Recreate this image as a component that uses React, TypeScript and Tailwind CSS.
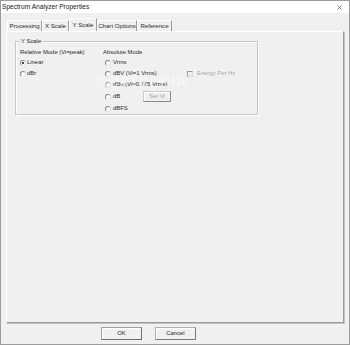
import React from "react";

const font = { fontFamily: '"Liberation Sans", Arial, sans-serif' };

function Radio({ checked = false }: { checked?: boolean }) {
  return (
    <span className="relative inline-flex w-[6px] h-[6px] shrink-0 rounded-full border border-[#8a8a8a] border-r-[#dcdcdc] border-b-[#e4e4e4] bg-white items-center justify-center">
      {checked && <span className="w-[2px] h-[2px] rounded-full bg-[#111]" />}
    </span>
  );
}

function Tab({ label, w, selected = false }: { label: string; w: string; selected?: boolean }) {
  return (
    <div
      className={
        (selected
          ? "h-[13px] z-10 border-t border-l border-white border-r border-r-[#9a9a9a] "
          : "h-[11px] border-t border-l border-white border-r border-r-[#9a9a9a] ") +
        w +
        " flex items-center justify-center whitespace-nowrap text-[6.1px] leading-none text-[#2a2a2a] bg-[#f0f0f0]"
      }
    >
      {label}
    </div>
  );
}

export default function App() {
  return (
    <div
      className="relative w-[350px] h-[345px] border border-[#9c9c9c] bg-[#f0f0f0] flex flex-col overflow-hidden"
      style={font}
    >
      {/* title bar */}
      <div className="h-[12px] bg-white flex items-center justify-between pl-[1px] pr-[7px]">
        <span className="text-[6.6px] leading-none text-[#1a1a1a] whitespace-nowrap">Spectrum Analyzer Properties</span>
        <svg width="5" height="5" viewBox="0 0 5 5">
          <path d="M0.5 0.5 L4.5 4.5 M4.5 0.5 L0.5 4.5" stroke="#555" strokeWidth="0.7" />
        </svg>
      </div>

      {/* tabs */}
      <div className="h-[18px] flex items-end pl-[6px]">
        <Tab label="Processing" w="w-[35px]" />
        <Tab label="X Scale" w="w-[27px]" />
        <Tab label="Y Scale" w="w-[28px]" selected />
        <Tab label="Chart Options" w="w-[40px]" />
        <Tab label="Reference" w="w-[35px]" />
      </div>

      {/* panel */}
      <div className="ml-[5px] w-[338px] h-[292px] border-l border-t border-white border-r border-b border-r-[#9a9a9a] border-b-[#9a9a9a] shadow-[1px_1px_0_#c2c2c2] pl-[8px] pt-[9px]">
        <div className="relative w-[243px] h-[74px] border border-[#c6c6c6] shadow-[1px_1px_0_#ffffff,inset_1px_1px_0_#ffffff] pl-[4px] pt-[6px] text-[5.9px] leading-none text-[#2a2a2a] whitespace-nowrap">
          <span className="absolute left-[4px] -top-[4px] px-[1px] bg-[#f0f0f0] leading-[7px]">Y Scale</span>
          <div className="flex">
            {/* column 1 */}
            <div className="w-[83px] flex flex-col">
              <div className="h-[10px] flex items-center">Relative Mode (Vi=peak)</div>
              <div className="h-[10px] flex items-center gap-[1px]">
                <Radio checked />
                <span>Linear</span>
              </div>
              <div className="h-[11px] flex items-center gap-[1px]">
                <Radio />
                <span>dBr</span>
              </div>
            </div>
            {/* column 2 */}
            <div className="w-[83px] flex flex-col">
              <div className="h-[10px] flex items-center">Absolute Mode</div>
              <div className="h-[10px] flex items-center gap-[2px] pl-[2px]">
                <Radio />
                <span>Vrms</span>
              </div>
              <div className="h-[11px] flex items-center gap-[2px] pl-[2px]">
                <Radio />
                <span>dBV (Vi=1 Vrms)</span>
              </div>
              <div className="h-[12px] flex items-center gap-[2px] pl-[2px]">
                <Radio />
                <span>dBu (Vi=0.775 Vrms)</span>
              </div>
              <div className="h-[12px] flex items-center gap-[2px] pl-[2px]">
                <Radio />
                <span className="w-[28px]">dB</span>
                <div className="w-[28px] h-[11px] flex items-center justify-center border border-[#c8c8c8] border-r-[#8a8a8a] border-b-[#8a8a8a] shadow-[inset_1px_1px_0_#ffffff] text-[#a3a3a3] mt-[-1px]">
                  Set Vi
                </div>
              </div>
              <div className="h-[11px] flex items-center gap-[2px] pl-[2px]">
                <Radio />
                <span>dBFS</span>
              </div>
            </div>
            {/* column 3 */}
            <div className="flex flex-col">
              <div className="h-[20px]" />
              <div className="h-[11px] flex items-center gap-[4px] pl-[1px]">
                <span className="w-[6px] h-[6px] border border-[#9a9a9a] border-r-[#dcdcdc] border-b-[#dcdcdc] bg-[#f0f0f0]" />
                <span className="text-[#a8a8a8]">Energy Per Hz</span>
              </div>
            </div>
          </div>
        </div>
      </div>

      {/* buttons */}
      <div className="mt-[4px] flex pl-[100px] gap-[13px] text-[5.9px] leading-none text-[#2a2a2a]">
        <div className="w-[41px] h-[13px] flex items-center justify-center border border-[#a0a0a0] border-r-[#6f6f6f] border-b-[#6f6f6f] shadow-[inset_1px_1px_0_#ffffff]">
          OK
        </div>
        <div className="w-[41px] h-[13px] flex items-center justify-center border border-[#b0b0b0] border-r-[#7a7a7a] border-b-[#7a7a7a] shadow-[inset_1px_1px_0_#ffffff]">
          Cancel
        </div>
      </div>

      {/* watermark */}
      <div className="absolute left-[96px] top-[73px] text-[15px] leading-[15px] text-white/50 tracking-[0.5px] pointer-events-none">
        SOFTPEDIA
      </div>
    </div>
  );
}
